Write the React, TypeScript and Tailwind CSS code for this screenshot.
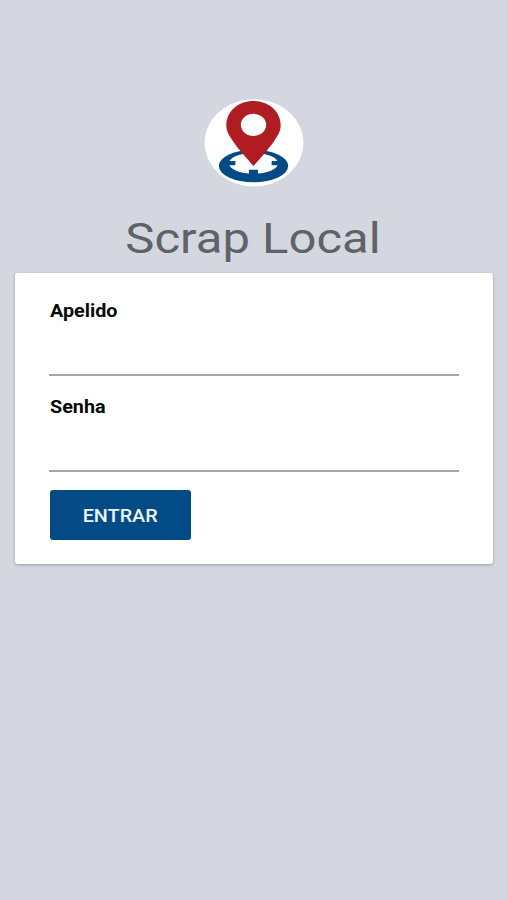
import { FormEvent, useState } from 'react';

function Logo() {
  return (
    <svg viewBox="27 27 300 264" className="h-[88px] w-[100px]" aria-hidden="true">
      <ellipse cx="177" cy="158.5" rx="148" ry="131" fill="#fff" />
      <ellipse cx="175.5" cy="228" rx="104" ry="49" fill="#034b87" />
      <ellipse cx="175.5" cy="220" rx="74" ry="31" fill="#fff" />
      <path d="M98 213h23v13H98zM230 213h23v13h-23zM162 239h27v20h-27z" fill="#034b87" />
      <path
        d="M175.5 228C156 205 130 178 113 152C101 135 94 123 94 106C94 64 130 33 175.5 33S257 64 257 106C257 123 250 135 238 152C221 178 195 205 175.5 228Z"
        fill="#b01c22"
      />
      <ellipse cx="175.5" cy="104.5" rx="38" ry="33.5" fill="#fff" />
    </svg>
  );
}

function Field({ name, label, type = 'text' }: { name: string; label: string; type?: string }) {
  const [value, setValue] = useState('');

  return (
    <div className="flex h-24 flex-col">
      <label
        htmlFor={name}
        className="ml-px origin-left scale-x-[1.13] self-start text-[17.5px] leading-6 font-bold text-[#080808]"
      >
        {label}
      </label>
      <input
        id={name}
        name={name}
        type={type}
        value={value}
        onChange={(e) => setValue(e.target.value)}
        className="h-[53px] w-full border-b-2 border-[#a6a6a6] bg-transparent px-0.5 text-lg outline-none"
      />
    </div>
  );
}

export default function App() {
  const onSubmit = (event: FormEvent<HTMLFormElement>) => {
    event.preventDefault();
  };

  return (
    <main className="flex min-h-screen flex-col items-center bg-[#d4d7e0] pt-[99px] font-[Roboto,sans-serif]">
      <Logo />
      <h1 className="mt-[25px] scale-x-[1.14] text-[43px] leading-[52px] whitespace-nowrap text-[#5f6267]">
        Scrap Local
      </h1>
      <form
        onSubmit={onSubmit}
        className="mt-[9px] h-[291px] w-[478px] rounded-[3px] bg-white pt-[26px] pr-[34px] pl-[34px] shadow-[0_1px_3px_rgba(60,60,90,0.4)]"
      >
        <Field name="nickname" label="Apelido" />
        <Field name="password" label="Senha" type="password" />
        <button
          type="submit"
          className="mt-[-1px] ml-px flex h-[50px] w-[141px] items-center justify-center rounded-[3px] bg-[#034b87] pt-0.5 pl-px text-[17.5px] font-medium text-[#eef5fb]"
        >
          <span className="scale-x-[1.13]">ENTRAR</span>
        </button>
      </form>
    </main>
  );
}
